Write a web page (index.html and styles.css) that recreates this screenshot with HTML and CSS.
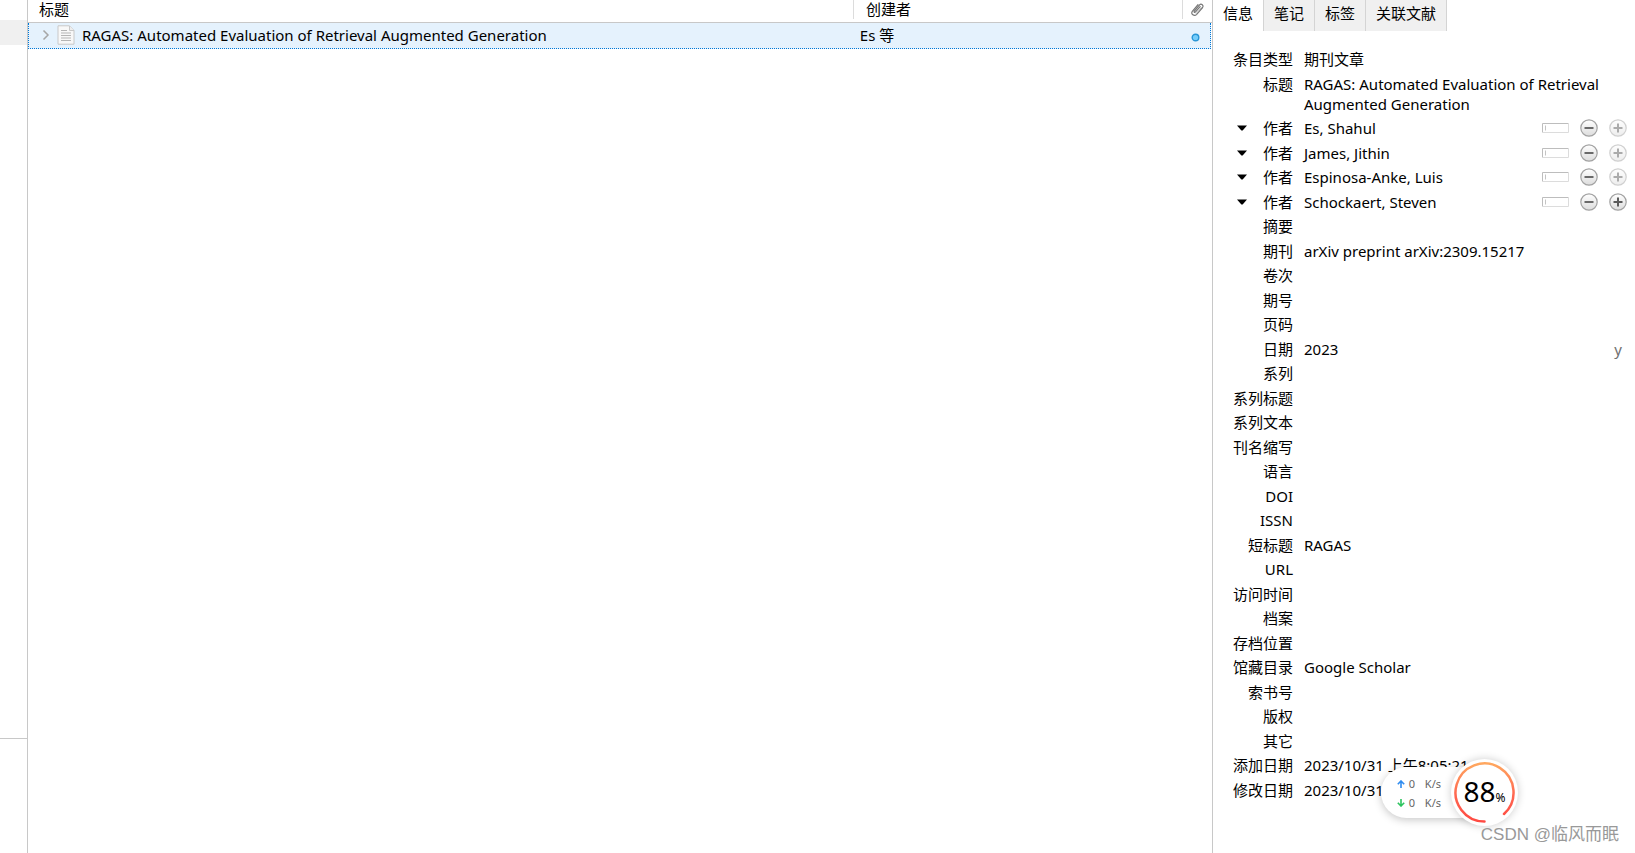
FILE: index.html
```html
<!DOCTYPE html>
<html lang="zh-CN">
<head>
<meta charset="utf-8">
<title>RAGAS</title>
<link rel="stylesheet" href="styles.css">
</head>
<body>
<svg class="defs" width="0" height="0" aria-hidden="true">
  <defs>
    <linearGradient id="knob" x1="0" y1="0" x2="0" y2="1"><stop offset="0" stop-color="#fff"/><stop offset="1" stop-color="#dcdcdc"/></linearGradient>
    <linearGradient id="heat" x1="0" y1="0" x2="0" y2="1"><stop offset="0" stop-color="#ffa75f"/><stop offset=".55" stop-color="#ff6650"/><stop offset="1" stop-color="#ff4a42"/></linearGradient>
    <symbol id="minus" viewBox="0 0 18 18"><circle cx="9" cy="9" r="8.200" fill="url(#knob)" stroke="#a2a2a2" stroke-width="1.200"/><path d="M4.500 9h9" stroke="#6a6a6a" stroke-width="2"/></symbol>
    <symbol id="plus" viewBox="0 0 18 18"><circle cx="9" cy="9" r="8.200" fill="url(#knob)" stroke="#a2a2a2" stroke-width="1.200"/><path d="M4.500 9h9M9 4.500v9" stroke="#5a5a5a" stroke-width="2"/></symbol>
    <symbol id="caret" viewBox="0 0 10 6"><path d="M0 .5h10L5.600 5.500h-1.200z" fill="#000"/></symbol>
    <symbol id="mode" viewBox="0 0 27 10"><path d="M.5 9.500V.5h26" fill="none" stroke="#bdbdbd"/><path d="M26.500 .5v9H.5" fill="none" stroke="#dcdcdc"/><path d="M3.500 2.500v5" stroke="#c4c4c4"/></symbol>
  </defs>
</svg>
<div class="app">
  <aside class="collections"><div class="collections-selected"></div><div class="tag-pane"></div></aside>
  <main class="items">
    <div class="cols head">
      <div class="head-cell">标题</div>
      <div class="head-cell">创建者</div>
      <div class="head-cell clip-cell">
        <svg width="15" height="15" viewBox="0 0 15 15" fill="none" stroke="#777" stroke-width="1.200" stroke-linecap="round"><path d="M10.200 4.600 5.300 10.100c-.7.8-1.700-.1-1-.9L9.600 2.900c1.600-1.700 4.600.6 3 2.600L6.700 12.300C4.300 14.800.3 12 2.300 9.300L8 2.600"/><path d="M11.300 5.700 6.200 11.500" stroke="#aaa" stroke-width=".8"/></svg>
      </div>
    </div>
    <div class="cols row">
      <div class="title-cell">
        <button class="plain" aria-label="展开"><svg width="8" height="12" viewBox="0 0 8 12"><path d="M1.500 1.500 6 6 1.500 10.500" fill="none" stroke="#a6a6a6" stroke-width="1.500"/></svg></button>
        <svg width="18" height="20" viewBox="0 0 18 20"><path d="M1 .8h11.500L17 5.500v13.700H1z" fill="#f8f8f8" stroke="#c8c8c8"/><path d="M12.500 1v4.500H17" fill="#eee" stroke="#c8c8c8"/><path d="M4 5.500h6M4 8h10M4 10.500h10M4 13h10M4 15.500h10" stroke="#b5b5b5"/></svg>
        <span>RAGAS: Automated Evaluation of Retrieval Augmented Generation</span>
      </div>
      <div class="creator-cell">Es 等</div>
      <div class="clip-cell"><svg width="9" height="9" viewBox="0 0 9 9"><circle cx="4.500" cy="4.500" r="3.300" fill="#76cdfa" stroke="#2996d6" stroke-width="1.400"/></svg></div>
    </div>
  </main>
  <section class="details">
    <nav class="tabs"><button class="tab active">信息</button><button class="tab">笔记</button><button class="tab">标签</button><button class="tab">关联文献</button></nav>
    <dl class="fields">
      <div class="field"><dt>条目类型</dt><dd>期刊文章</dd></div>
      <div class="field"><dt>标题</dt><dd>RAGAS: Automated Evaluation of Retrieval Augmented Generation</dd></div>
      <div class="field"><dt><button class="plain caret" aria-label="作者类型"><svg width="10" height="6"><use href="#caret"/></svg></button>作者</dt><dd>Es, Shahul</dd><dd class="tools"><button class="plain" aria-label="单栏"><svg width="27" height="10"><use href="#mode"/></svg></button><button class="plain" aria-label="删除"><svg width="18" height="18"><use href="#minus"/></svg></button><button class="plain" aria-label="添加" disabled><svg width="18" height="18"><use href="#plus"/></svg></button></dd></div>
      <div class="field"><dt><button class="plain caret" aria-label="作者类型"><svg width="10" height="6"><use href="#caret"/></svg></button>作者</dt><dd>James, Jithin</dd><dd class="tools"><button class="plain" aria-label="单栏"><svg width="27" height="10"><use href="#mode"/></svg></button><button class="plain" aria-label="删除"><svg width="18" height="18"><use href="#minus"/></svg></button><button class="plain" aria-label="添加" disabled><svg width="18" height="18"><use href="#plus"/></svg></button></dd></div>
      <div class="field"><dt><button class="plain caret" aria-label="作者类型"><svg width="10" height="6"><use href="#caret"/></svg></button>作者</dt><dd>Espinosa-Anke, Luis</dd><dd class="tools"><button class="plain" aria-label="单栏"><svg width="27" height="10"><use href="#mode"/></svg></button><button class="plain" aria-label="删除"><svg width="18" height="18"><use href="#minus"/></svg></button><button class="plain" aria-label="添加" disabled><svg width="18" height="18"><use href="#plus"/></svg></button></dd></div>
      <div class="field"><dt><button class="plain caret" aria-label="作者类型"><svg width="10" height="6"><use href="#caret"/></svg></button>作者</dt><dd>Schockaert, Steven</dd><dd class="tools"><button class="plain" aria-label="单栏"><svg width="27" height="10"><use href="#mode"/></svg></button><button class="plain" aria-label="删除"><svg width="18" height="18"><use href="#minus"/></svg></button><button class="plain" aria-label="添加"><svg width="18" height="18"><use href="#plus"/></svg></button></dd></div>
      <div class="field"><dt>摘要</dt><dd></dd></div>
      <div class="field"><dt>期刊</dt><dd>arXiv preprint arXiv:2309.15217</dd></div>
      <div class="field"><dt>卷次</dt><dd></dd></div>
      <div class="field"><dt>期号</dt><dd></dd></div>
      <div class="field"><dt>页码</dt><dd></dd></div>
      <div class="field"><dt>日期</dt><dd>2023</dd><dd class="order">y</dd></div>
      <div class="field"><dt>系列</dt><dd></dd></div>
      <div class="field"><dt>系列标题</dt><dd></dd></div>
      <div class="field"><dt>系列文本</dt><dd></dd></div>
      <div class="field"><dt>刊名缩写</dt><dd></dd></div>
      <div class="field"><dt>语言</dt><dd></dd></div>
      <div class="field"><dt>DOI</dt><dd></dd></div>
      <div class="field"><dt>ISSN</dt><dd></dd></div>
      <div class="field"><dt>短标题</dt><dd>RAGAS</dd></div>
      <div class="field"><dt>URL</dt><dd></dd></div>
      <div class="field"><dt>访问时间</dt><dd></dd></div>
      <div class="field"><dt>档案</dt><dd></dd></div>
      <div class="field"><dt>存档位置</dt><dd></dd></div>
      <div class="field"><dt>馆藏目录</dt><dd>Google Scholar</dd></div>
      <div class="field"><dt>索书号</dt><dd></dd></div>
      <div class="field"><dt>版权</dt><dd></dd></div>
      <div class="field"><dt>其它</dt><dd></dd></div>
      <div class="field"><dt>添加日期</dt><dd>2023/10/31 上午8:05:21</dd></div>
      <div class="field"><dt>修改日期</dt><dd>2023/10/31</dd></div>
    </dl>
  </section>
</div>
<div class="monitor">
  <div class="speeds">
    <svg width="8" height="8" viewBox="0 0 8 8" fill="none" stroke="#2f8cf0" stroke-width="1.600"><path d="M4 8V1.200M.8 4.200 4 1l3.200 3.200"/></svg><span>0</span><span>K/s</span>
    <svg width="8" height="8" viewBox="0 0 8 8" fill="none" stroke="#2cc45e" stroke-width="1.600"><path d="M4 0v6.800M.8 3.800 4 7l3.200-3.200"/></svg><span>0</span><span>K/s</span>
  </div>
  <div class="gauge">
    <svg class="ring" viewBox="0 0 67 67"><path d="M33.500 62.500A29 29 0 1 1 53 55" fill="none" stroke="url(#heat)" stroke-width="2.500" stroke-linecap="round"/></svg>
    <span class="percent">88<small>%</small></span>
  </div>
</div>
<div class="watermark">CSDN @临风而眠</div>
</body>
</html>
```
FILE: styles.css
```css
* { box-sizing: border-box; }
body {
  margin: 0;
  background: #fff;
  color: #000;
  font: 15px/20px "Noto Sans", "Noto Sans CJK SC", sans-serif;
}
.defs { position: absolute; }
svg { display: block; flex: none; }
button { font: inherit; color: inherit; border: 0; cursor: pointer; }
.plain { padding: 0; background: none; display: flex; align-items: center; }
.app { display: flex; min-height: 100vh; }

.collections {
  flex: 0 0 28px;
  border-right: 1px solid #c8c8c8;
  display: flex;
  flex-direction: column;
  justify-content: space-between;
  padding-top: 20px;
}
.collections-selected { height: 25px; background: #f0f0f0; }
.tag-pane { height: 115px; border-top: 1px solid #c8c8c8; }

.items { flex: 1; min-width: 0; }
.cols { display: grid; grid-template-columns: 826fr 329fr 29px; }
.head { height: 23px; border-bottom: 1px solid #c8c8c8; line-height: 18px; }
.head-cell { height: 19px; padding-left: 11px; border-right: 1px solid #dcdcdc; white-space: nowrap; }
.head-cell + .head-cell { padding-left: 12px; }
.head-cell.clip-cell { border: 0; padding: 0; }
.clip-cell { display: flex; align-items: center; justify-content: center; padding: 0; }
.row .clip-cell { padding-top: 2px; }
.row {
  height: 26px;
  margin-right: 1px;
  line-height: 24px;
  background: #e5f2fd;
  border: 1px dotted #0078d7;
  border-top: 0;
}
.title-cell { display: flex; align-items: center; gap: 7px; padding: 0 0 2px 13px; white-space: nowrap; }
.creator-cell { padding-left: 7px; }

.details { flex: 0 0 423px; border-left: 1px solid #c8c8c8; }
.tabs { display: flex; height: 31px; }
.tab { padding: 0 10px 6px; background: #f0f0f0; border-right: 1px solid #d4d4d4; }
.tab.active { background: #fff; }
.fields { margin: 0; padding: 16px 8px 0 13px; }
.field { display: flex; padding: 2px 0; }
.field:nth-child(odd) { padding-bottom: 3px; }
dt { flex: 0 0 67px; display: flex; justify-content: flex-end; white-space: nowrap; }
dd { margin: 0; padding-left: 11px; flex: 1; min-height: 20px; }
.caret { margin-right: auto; padding-left: 11px; }
dd.tools { flex: none; display: flex; align-items: center; gap: 11px; padding: 0; }
dd.order { flex: none; padding-right: 5px; color: #707070; }
.plain:disabled { opacity: .5; }

.monitor {
  position: absolute;
  right: 117px;
  top: 759px;
  display: flex;
  align-items: center;
}
.speeds {
  display: grid;
  grid-template-columns: 8px 6px auto;
  align-items: center;
  column-gap: 4px;
  height: 51px;
  padding: 8px 40px 6px 16px;
  margin-right: -30px;
  border-radius: 26px 0 0 26px;
  background: #fff;
  box-shadow: 0 2px 8px rgba(0, 0, 0, .22);
  color: #666;
  font-size: 11px;
  line-height: 18px;
}
.speeds span:nth-child(3n) { padding-left: 6px; }
.gauge {
  position: relative;
  width: 67px;
  height: 67px;
  border-radius: 50%;
  background: #fff;
  box-shadow: 0 0 8px rgba(0, 0, 0, .2);
  display: flex;
  align-items: center;
  justify-content: center;
}
.ring { position: absolute; inset: 0; }
.percent { padding-top: 4px; font-size: 28px; line-height: 32px; white-space: nowrap; }
.percent small { font-size: 12px; }
.watermark {
  position: absolute;
  right: 16px;
  top: 823px;
  color: #999;
  font: 17px/24px "Liberation Sans", "Noto Sans CJK SC", sans-serif;
}
```
